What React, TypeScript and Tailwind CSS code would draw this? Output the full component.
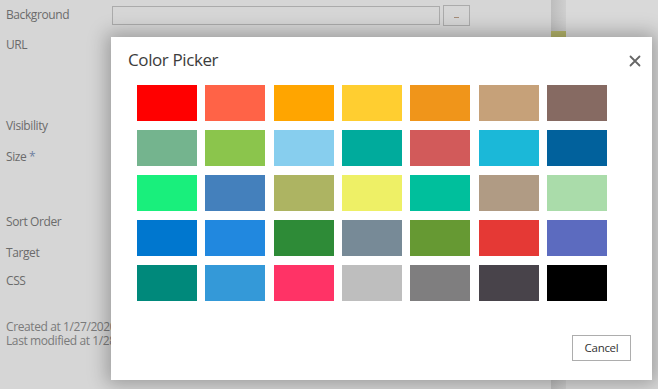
import React from "react";

const colors: string[] = [
  "#ff0000", "#ff6347", "#ffa500", "#ffce30", "#f0951a", "#c6a179", "#866a62",
  "#74b48e", "#8bc54c", "#87ceee", "#00ab9c", "#d25a5a", "#1bb8d8", "#01619c",
  "#19ef7c", "#4480bc", "#adb462", "#eef066", "#00bf9c", "#b09b84", "#aadcaa",
  "#0077cf", "#2188df", "#2e8b37", "#778a97", "#669933", "#e53935", "#5c6bbf",
  "#00897b", "#3499d8", "#ff3366", "#bebebe", "#7f7e7f", "#48434a", "#000000",
];

export default function App() {
  const font = { fontFamily: '"Open Sans", "Noto Sans", sans-serif' };
  return (
    <div className="relative w-[658px] h-[389px] overflow-hidden bg-[#d6d6d6]" style={font}>
      {/* background page (dimmed) */}
      <div className="flex h-full">
        <div className="w-[551px] flex flex-col pl-[6px] text-[12px] leading-[16px] tracking-[-0.4px] text-[#6b6b6b]">
          <div className="flex items-center mt-[7px] h-[16px]">
            <span className="w-[106px]">Background</span>
            <div className="h-[19px] w-[328px] border border-[#ababab]" />
            <div className="ml-[3px] h-[21px] w-[27px] border border-[#ababab] flex items-center justify-center">
              <div className="w-[5px] h-[1px] bg-[#a58c78] mt-[5px]" />
            </div>
          </div>
          <div className="mt-[14px]">URL</div>
          <div className="mt-[65px]">Visibility</div>
          <div className="mt-[15px]">Size <span className="text-[#6d7fa0]">*</span></div>
          <div className="mt-[49px]">Sort Order</div>
          <div className="mt-[15px]">Target</div>
          <div className="mt-[12px]">CSS</div>
          <div className="mt-[31px] leading-[14px] text-[#7a7a7a] whitespace-nowrap">Created at 1/27/2020</div>
          <div className="leading-[14px] text-[#7a7a7a] whitespace-nowrap">Last modified at 1/28/2020</div>
        </div>
        <div className="w-[15px] h-full bg-gradient-to-r from-[#bdbdbd] to-[#cfcfcf] flex flex-col">
          <div className="mt-[31px] h-[6px] bg-[#b5b56a]" />
        </div>
        <div className="flex-1 bg-[#d9d9d9]" />
      </div>

      {/* dialog */}
      <div className="absolute left-[111px] top-[37px] w-[541px] h-[343px] bg-white shadow-[0_0_18px_4px_rgba(0,0,0,0.28)] flex flex-col">
        <div className="flex items-start justify-between pl-[17px] pr-[11px] pt-[11px]">
          <div className="text-[17px] leading-[24px] tracking-[-0.4px] text-[#3c3c3c]">Color Picker</div>
          <svg width="12" height="12" viewBox="0 0 12 12" className="mt-[7px]">
            <path d="M1.5 1.5 L10.5 10.5 M10.5 1.5 L1.5 10.5" stroke="#666" strokeWidth="1.8" strokeLinecap="round" />
          </svg>
        </div>
        <div className="ml-[26px] mt-[13px] w-[470px] grid grid-cols-7 gap-x-[8.33px] gap-y-[9px]">
          {colors.map((c, i) => (
            <div key={i} className="h-[36px]" style={{ backgroundColor: c }} />
          ))}
        </div>
        <div className="flex-1" />
        <div className="flex justify-end pr-[21px] pb-[19px]">
          <button className="w-[59px] h-[26px] border border-[#adadad] bg-white text-[11.5px] tracking-[-0.3px] text-[#333] flex items-center justify-center">
            Cancel
          </button>
        </div>
      </div>
    </div>
  );
}
